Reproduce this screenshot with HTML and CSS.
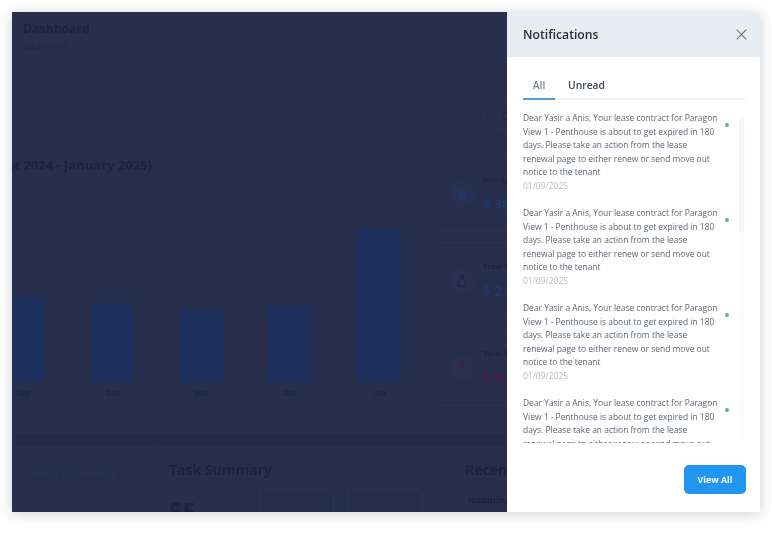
FILE: index.html
```html
<!DOCTYPE html>
<html lang="en">
<head>
    <meta charset="UTF-8">
    <meta name="viewport" content="width=device-width, initial-scale=1.0">
    <title>Dashboard</title>
    <link rel="stylesheet" href="styles.css">
</head>
<body>
    <div class="window">
        <div class="dash">
            <div class="dash-head">
                <h1>Dashboard</h1>
                <p>Dashboard</p>
            </div>

            <div class="dash-main">
                <div class="chart">
                    <div class="chart-title"><span>Rent Collection (August 2024 - January 2025)</span></div>
                    <div class="bars">
                        <div class="bar-col"><div class="bar h-sep"></div><span>Sep</span></div>
                        <div class="bar-col"><div class="bar h-oct"></div><span>Oct</span></div>
                        <div class="bar-col"><div class="bar h-nov"></div><span>Nov</span></div>
                        <div class="bar-col"><div class="bar h-dec"></div><span>Dec</span></div>
                        <div class="bar-col"><div class="bar h-jan"></div><span>Jan</span></div>
                    </div>
                </div>

                <div class="stats">
                    <div class="range-btn">Current</div>
                    <div class="stat">
                        <div class="stat-icon">
                            <svg width="12" height="12" viewBox="0 0 14 14" fill="none" stroke="#1c3a78" stroke-width="1.3"><rect x="3" y="3" width="8" height="9" rx="2"/><path d="M3 6h8M3 9h8"/></svg>
                        </div>
                        <div><b>Average</b><strong class="blue">$ 36,000</strong></div>
                    </div>
                    <div class="stat">
                        <div class="stat-icon">
                            <svg width="12" height="14" viewBox="0 0 14 16" fill="none" stroke="#1a2038" stroke-width="1.1"><path d="M5 2h4L8 5h-2zM6 5C3 7 2 10 2 12c0 2 2 2 5 2s5 0 5-2c0-2-1-5-4-7"/></svg>
                        </div>
                        <div><b>Total Income</b><strong class="blue">$ 2,500</strong></div>
                    </div>
                    <div class="stat">
                        <div class="stat-icon">
                            <svg width="12" height="14" viewBox="0 0 14 16" fill="none" stroke="#44213f" stroke-width="1.1"><path d="M5 2h4L8 5h-2zM6 5C3 7 2 10 2 12c0 2 2 2 5 2s5 0 5-2c0-2-1-5-4-7"/></svg>
                        </div>
                        <div><b>Total Pending</b><strong class="red">$ 910</strong></div>
                    </div>
                </div>
            </div>

            <div class="dash-bottom">
                <div class="card card-props">
                    <div class="props-link">View all Properties
                        <svg width="6" height="10" viewBox="0 0 6 10" fill="none" stroke="#222b4c" stroke-width="1.2"><path d="M1 1l4 4-4 4"/></svg>
                    </div>
                    <div class="props-box"></div>
                </div>
                <div class="card card-task">
                    <h2>Task Summary</h2>
                    <div class="task-row">
                        <div class="task-num">55</div>
                        <div class="task-box"></div>
                        <div class="task-box"></div>
                    </div>
                </div>
                <div class="card card-recent">
                    <h2>Recent Activity</h2>
                    <p>Incoming</p>
                </div>
            </div>
        </div>

        <div class="panel">
            <div class="panel-head">
                <h3>Notifications</h3>
                <svg class="close" width="11" height="11" viewBox="0 0 11 11" fill="none" stroke="#6f7884" stroke-width="1.2"><path d="M.7.7l9.6 9.6M10.3.7L.7 10.3"/></svg>
            </div>
            <div class="panel-body">
                <div class="tabs">
                    <div class="tab active">All</div>
                    <div class="tab">Unread</div>
                </div>
                <div class="list">
                    <div class="items">
                        <div class="note">
                            <div class="note-text">
                                <p>Dear Yasir a Anis, Your lease contract for Paragon View 1 - Penthouse is about to get expired in 180 days. Please take an action from the lease renewal page to either renew or send move out notice to the tenant</p>
                                <span>01/09/2025</span>
                            </div>
                            <i class="dot"></i>
                        </div>
                        <div class="note">
                            <div class="note-text">
                                <p>Dear Yasir a Anis, Your lease contract for Paragon View 1 - Penthouse is about to get expired in 180 days. Please take an action from the lease renewal page to either renew or send move out notice to the tenant</p>
                                <span>01/09/2025</span>
                            </div>
                            <i class="dot"></i>
                        </div>
                        <div class="note">
                            <div class="note-text">
                                <p>Dear Yasir a Anis, Your lease contract for Paragon View 1 - Penthouse is about to get expired in 180 days. Please take an action from the lease renewal page to either renew or send move out notice to the tenant</p>
                                <span>01/09/2025</span>
                            </div>
                            <i class="dot"></i>
                        </div>
                        <div class="note">
                            <div class="note-text">
                                <p>Dear Yasir a Anis, Your lease contract for Paragon View 1 - Penthouse is about to get expired in 180 days. Please take an action from the lease renewal page to either renew or send move out notice to the tenant</p>
                                <span>01/09/2025</span>
                            </div>
                            <i class="dot"></i>
                        </div>
                    </div>
                    <div class="scroll"><div class="thumb"></div></div>
                </div>
                <div class="panel-foot">
                    <button class="view-all">View All</button>
                </div>
            </div>
        </div>
    </div>
</body>
</html>
```

FILE: styles.css
```css
body {
    margin: 0;
    padding: 12px;
    background-color: #fff;
    font-family: 'Open Sans', sans-serif;
    overflow: hidden;
}

.window {
    display: flex;
    width: 748px;
    height: 500px;
    border-radius: 0 3px 3px 0;
    overflow: hidden;
    box-shadow: 0 2px 14px rgba(30, 40, 60, 0.22);
}

/* dashboard behind the overlay */
.dash {
    width: 495px;
    flex-shrink: 0;
    overflow: hidden;
    background-color: #282f4d;
    color: #1b2341;
    filter: blur(0.5px);
}

.dash-head {
    height: 56px;
    padding: 8px 11px 0;
    box-sizing: border-box;
    border-bottom: 1px solid #262d4b;
}

.dash-head h1 {
    margin: 0;
    font-size: 12.3px;
    font-weight: 700;
    line-height: 17px;
}

.dash-head p {
    margin: 3px 0 0;
    font-size: 8.5px;
    color: #1f2746;
}

.dash-main {
    display: flex;
    height: 366px;
}

.chart {
    width: 425px;
    flex-shrink: 0;
}

.chart-title {
    display: flex;
    justify-content: flex-end;
    width: 140px;
    margin-top: 89px;
    font-size: 13px;
    font-weight: 700;
    line-height: 17px;
    white-space: nowrap;
}

.bars {
    display: flex;
    align-items: flex-end;
    gap: 46px;
    height: 225px;
    margin-left: -10px;
}

.bar-col {
    display: flex;
    flex-direction: column;
    align-items: center;
    width: 43px;
    font-size: 8px;
    font-weight: 700;
    color: #1c2548;
}

.bar-col span {
    height: 12px;
    margin-top: 5px;
    line-height: 12px;
}

.bar {
    width: 43px;
    border-radius: 2px 2px 0 0;
    background-color: #1e315f;
}

.h-sep { height: 86px; }
.h-oct { height: 79px; }
.h-nov { height: 72px; }
.h-dec { height: 76px; }
.h-jan { height: 154px; }

.stats {
    flex: 1;
    min-width: 0;
}

.range-btn {
    width: 60px;
    height: 25px;
    margin: 34px 0 26px 46px;
    padding-left: 18px;
    border: 1px solid #2b3353;
    border-radius: 13px;
    font-size: 9px;
    line-height: 25px;
    white-space: nowrap;
}

.stat {
    display: flex;
    align-items: center;
    gap: 8px;
    width: 120px;
    height: 77px;
    margin-bottom: 10px;
    padding-left: 11px;
    box-sizing: border-box;
    border: 1px solid #2b3252;
    border-radius: 3px;
    white-space: nowrap;
}

.stat b {
    display: block;
    font-size: 7.5px;
    margin-bottom: 11px;
}

.stat strong {
    display: block;
    font-size: 13.5px;
    line-height: 18px;
}

.blue { color: #1f386f; }
.red { color: #4a1f47; }

.stat-icon {
    display: flex;
    align-items: center;
    justify-content: center;
    width: 26px;
    height: 26px;
    border-radius: 50%;
    background-color: #293050;
}

.dash-bottom {
    display: flex;
    gap: 5px;
    height: 78px;
    border-top: 12px solid #252c4a;
    box-sizing: border-box;
}

.card {
    overflow: hidden;
    white-space: nowrap;
}

.card h2 {
    margin: 0;
    font-size: 14px;
    font-weight: 700;
    line-height: 18px;
}

.card-props {
    width: 135px;
    flex-shrink: 0;
    padding: 25px 0 0 17px;
    box-sizing: border-box;
}

.props-link {
    display: flex;
    align-items: center;
    gap: 7px;
    font-size: 9.3px;
    color: #222b4c;
}

.props-box {
    width: 99px;
    height: 20px;
    margin-top: 12px;
    border: 1px solid #2a3151;
}

.card-task {
    width: 285px;
    flex-shrink: 0;
    padding: 15px 0 0 16px;
    box-sizing: border-box;
    border-left: 1px solid #262d4b;
}

.task-row {
    display: flex;
    gap: 14px;
    margin-top: 10px;
}

.task-num {
    width: 76px;
    margin-top: 8px;
    font-size: 24px;
    font-weight: 700;
    line-height: 28px;
}

.task-box {
    width: 75px;
    height: 40px;
    border: 1px solid #2d3557;
    border-radius: 3px;
    box-sizing: border-box;
}

.card-recent {
    flex: 1;
    padding: 15px 0 0 23px;
}

.card-recent p {
    margin: 14px 0 0 3px;
    font-size: 9px;
    font-weight: 700;
}

/* notification panel */
.panel {
    display: flex;
    flex-direction: column;
    flex: 1;
    min-width: 0;
    background-color: #fff;
    filter: blur(0.35px);
}

.panel-head {
    display: flex;
    align-items: center;
    justify-content: space-between;
    height: 45px;
    flex-shrink: 0;
    padding: 0 13px 1px 16px;
    box-sizing: border-box;
    background-color: #e8edf3;
}

.panel-head h3 {
    margin: 0;
    font-size: 12.2px;
    font-weight: 600;
    color: #252e3b;
}

.panel-body {
    display: flex;
    flex-direction: column;
    flex: 1;
    min-height: 0;
    padding: 0 14px 0 16px;
}

.tabs {
    display: flex;
    height: 43px;
    flex-shrink: 0;
    box-sizing: border-box;
    align-items: flex-end;
    border-bottom: 2px solid #eff2f6;
}

.tab {
    margin-bottom: -2px;
    padding: 0 0 6px;
    border-bottom: 2px solid transparent;
    font-size: 10.3px;
    font-weight: 600;
    color: #3d4653;
}

.tab.active {
    width: 32px;
    margin-right: 13px;
    text-align: center;
    border-bottom-color: #4f9bd4;
    color: #7c8794;
}

.list {
    display: flex;
    height: 343px;
    flex-shrink: 0;
}

.items {
    width: 216px;
    padding-top: 11px;
    overflow: hidden;
}

.note {
    display: flex;
    height: 95px;
}

.note-text {
    width: 197px;
    flex-shrink: 0;
}

.note-text p {
    margin: 0;
    font-size: 8.45px;
    line-height: 13.5px;
    color: #5d6671;
}

.note-text span {
    display: block;
    font-size: 8.5px;
    line-height: 13px;
    color: #b4bcc6;
}

.dot {
    width: 4px;
    height: 4px;
    margin: 12px 0 0 5px;
    border-radius: 50%;
    background-color: #62b096;
}

.scroll {
    width: 5px;
    height: 326px;
    margin-top: 15px;
    background-color: #fafbfd;
}

.thumb {
    height: 111px;
    margin-top: 5px;
    background-color: #f0f4f8;
}

.panel-foot {
    display: flex;
    justify-content: flex-end;
    padding-top: 22px;
}

.view-all {
    width: 62px;
    height: 29px;
    border: none;
    border-radius: 5px;
    background-color: #2196f0;
    color: #fff;
    font-family: 'Open Sans', sans-serif;
    font-size: 8.8px;
    font-weight: 700;
    cursor: pointer;
}
```
